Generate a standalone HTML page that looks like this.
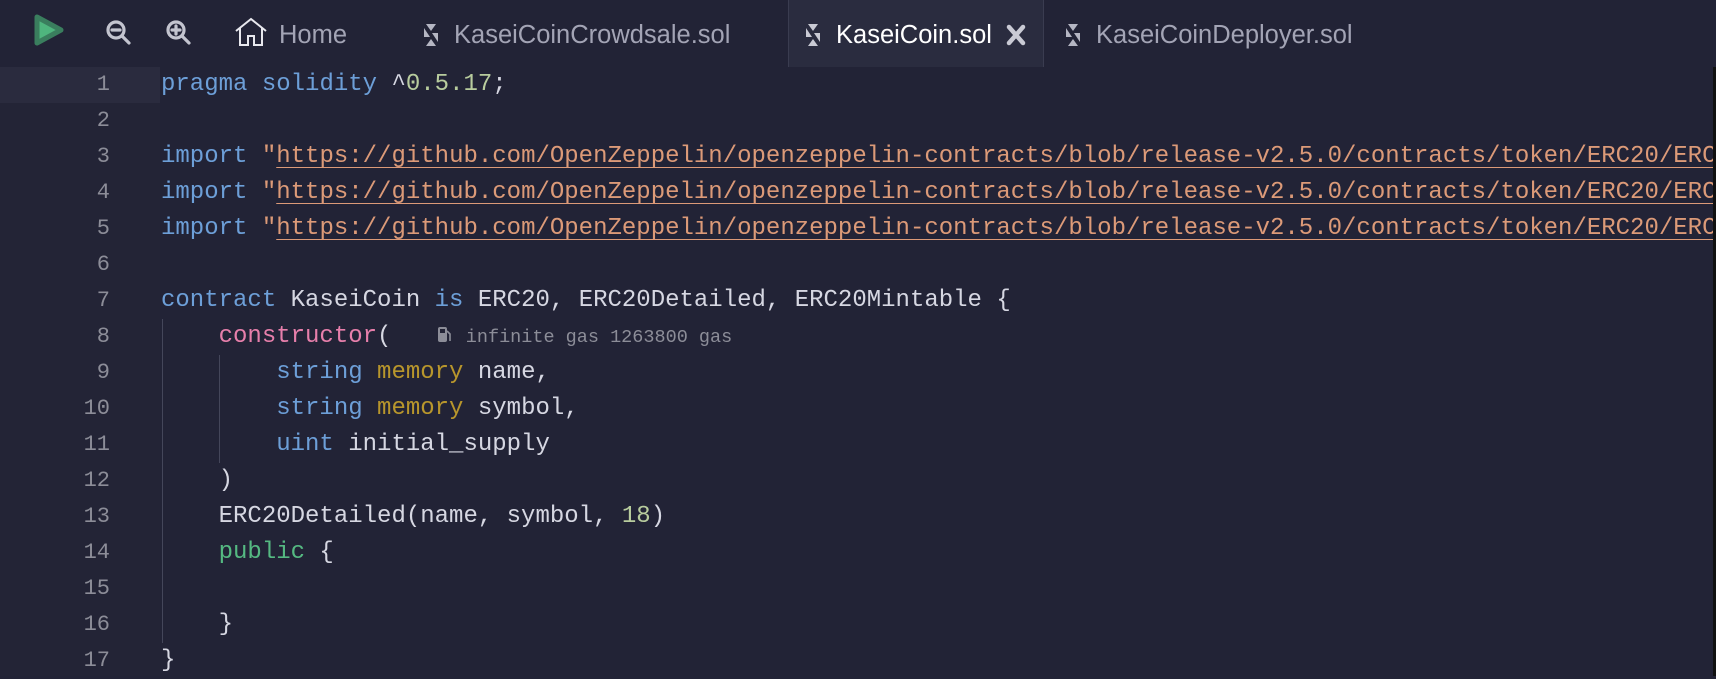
<!DOCTYPE html>
<html><head><meta charset="utf-8"><style>
*{margin:0;padding:0;box-sizing:border-box}
body{width:1716px;height:676px;background:#222336;overflow:hidden;position:relative;font-family:"Liberation Sans",sans-serif}
.tabs{position:absolute;left:0;top:0;width:1716px;height:67px;background:#222336}
.t{position:absolute;top:19px;font-size:25.5px;color:#a3a4b5;line-height:32px;white-space:nowrap}
.act{position:absolute;left:788px;top:0;width:256px;height:67px;background:#2a2c3f;border-left:1px solid #3a3c50;border-right:1px solid #3a3c50}
.gut{position:absolute;left:0;top:67px;width:160px;height:609px;background:#232436}
.cur{position:absolute;left:0;top:67px;width:160px;height:36px;background:#2a2b3e}
.ln{position:absolute;left:0;width:110px;text-align:right;font-family:"Liberation Mono",monospace;font-size:22px;color:#8c8d98;line-height:36px}
.cl{position:absolute;left:161px;width:1552px;font-family:"Liberation Mono",monospace;font-size:24px;color:#d6d7e2;line-height:36px;white-space:pre;overflow:hidden}
.k{color:#6d9fd8}.n{color:#b8cc9e}.s{color:#dc9a78;text-decoration:underline;text-underline-offset:5px;text-decoration-thickness:1px}
.p{color:#e77fab}.m{color:#b8962c}.g{color:#55b982}
.gas{font-size:18.5px;color:#8c8d98}
.guide{position:absolute;width:1px;background:#44465a}
</style></head><body>
<div class="tabs">
<svg style="position:absolute;left:33px;top:13px" width="32" height="34" viewBox="0 0 32 34"><path d="M4 4 L28 17 L4 30 Z" fill="#4fb57e" stroke="#3a7e5e" stroke-width="5" stroke-linejoin="round"/></svg>
<svg style="position:absolute;left:105px;top:19px" width="28" height="28" viewBox="0 0 28 28"><circle cx="11" cy="11" r="8" fill="none" stroke="#c3c4cf" stroke-width="3.2"/><path d="M7 11h8M17 17l7 7" stroke="#c3c4cf" stroke-width="3.2" stroke-linecap="round"/></svg>
<svg style="position:absolute;left:165px;top:19px" width="28" height="28" viewBox="0 0 28 28"><circle cx="11" cy="11" r="8" fill="none" stroke="#c3c4cf" stroke-width="3.2"/><path d="M7 11h8M11 7v8M17 17l7 7" stroke="#c3c4cf" stroke-width="3.2" stroke-linecap="round"/></svg>
<svg style="position:absolute;left:234px;top:17px" width="34" height="30" viewBox="0 0 34 30"><path d="M2 14 L17 2 L32 14 M6 11 V28 H14 V19 H20 V28 H28 V11" fill="none" stroke="#e8e8ee" stroke-width="2"/></svg>
<div class="t" style="left:279px">Home</div>
<svg style="position:absolute;left:423px;top:23px" width="16" height="24" viewBox="0 0 16 24"><path d="M3 1h10l-5 7zM1 5l6 9H1zM13 23H3l5-7zM15 19l-6-9h6z" fill="#b5b6c3"/></svg>
<div class="t" style="left:454px">KaseiCoinCrowdsale.sol</div>
<div class="act"></div>
<svg style="position:absolute;left:805px;top:23px" width="16" height="24" viewBox="0 0 16 24"><path d="M3 1h10l-5 7zM1 5l6 9H1zM13 23H3l5-7zM15 19l-6-9h6z" fill="#c9cad4"/></svg>
<div class="t" style="left:836px;color:#fff">KaseiCoin.sol</div>
<svg style="position:absolute;left:1006px;top:24px" width="20" height="22" viewBox="0 0 20 22"><path d="M3 3L17 19M17 3L3 19" stroke="#c9cad4" stroke-width="4.5" stroke-linecap="round"/></svg>
<svg style="position:absolute;left:1065px;top:23px" width="16" height="24" viewBox="0 0 16 24"><path d="M3 1h10l-5 7zM1 5l6 9H1zM13 23H3l5-7zM15 19l-6-9h6z" fill="#b5b6c3"/></svg>
<div class="t" style="left:1096px">KaseiCoinDeployer.sol</div>
</div>
<div class="gut"></div><div class="cur"></div>
<div class="guide" style="left:162px;top:319px;height:324px"></div>
<div class="guide" style="left:219px;top:355px;height:108px"></div>
<div class="ln" style="top:67px">1</div><div class="ln" style="top:103px">2</div><div class="ln" style="top:139px">3</div><div class="ln" style="top:175px">4</div><div class="ln" style="top:211px">5</div><div class="ln" style="top:247px">6</div><div class="ln" style="top:283px">7</div><div class="ln" style="top:319px">8</div><div class="ln" style="top:355px">9</div><div class="ln" style="top:391px">10</div><div class="ln" style="top:427px">11</div><div class="ln" style="top:463px">12</div><div class="ln" style="top:499px">13</div><div class="ln" style="top:535px">14</div><div class="ln" style="top:571px">15</div><div class="ln" style="top:607px">16</div><div class="ln" style="top:643px">17</div>
<div class="cl" style="top:67px"><span class="k">pragma</span> <span class="k">solidity</span> ^<span class="n">0.5.17</span>;</div>
<div class="cl" style="top:139px"><span class="k">import</span> <span style="color:#dc9a78">"</span><span class="s">https://github.com/OpenZeppelin/openzeppelin-contracts/blob/release-v2.5.0/contracts/token/ERC20/ERC20.sol</span></div>
<div class="cl" style="top:175px"><span class="k">import</span> <span style="color:#dc9a78">"</span><span class="s">https://github.com/OpenZeppelin/openzeppelin-contracts/blob/release-v2.5.0/contracts/token/ERC20/ERC20Detailed.sol</span></div>
<div class="cl" style="top:211px"><span class="k">import</span> <span style="color:#dc9a78">"</span><span class="s">https://github.com/OpenZeppelin/openzeppelin-contracts/blob/release-v2.5.0/contracts/token/ERC20/ERC20Mintable.sol</span></div>
<div class="cl" style="top:283px"><span class="k">contract</span> KaseiCoin <span class="k">is</span> ERC20, ERC20Detailed, ERC20Mintable {</div>
<div class="cl" style="top:319px">    <span class="p">constructor</span>(   <span class="gas"><svg width="20" height="20" viewBox="0 0 18 20" style="vertical-align:-3px"><rect x="2" y="2" width="9" height="15" rx="2" fill="#8c8d98"/><rect x="4" y="4" width="5" height="4" fill="#232436"/><path d="M11 6l3 3v7" fill="none" stroke="#8c8d98" stroke-width="1.6"/></svg> infinite gas 1263800 gas</span></div>
<div class="cl" style="top:355px">        <span class="k">string</span> <span class="m">memory</span> name,</div>
<div class="cl" style="top:391px">        <span class="k">string</span> <span class="m">memory</span> symbol,</div>
<div class="cl" style="top:427px">        <span class="k">uint</span> initial_supply</div>
<div class="cl" style="top:463px">    )</div>
<div class="cl" style="top:499px">    ERC20Detailed(name, symbol, <span class="n">18</span>)</div>
<div class="cl" style="top:535px">    <span class="g">public</span> {</div>
<div class="cl" style="top:607px">    }</div>
<div class="cl" style="top:643px">}</div>
<div style="position:absolute;left:1713px;top:67px;width:3px;height:609px;background:#111"></div>
</body></html>
